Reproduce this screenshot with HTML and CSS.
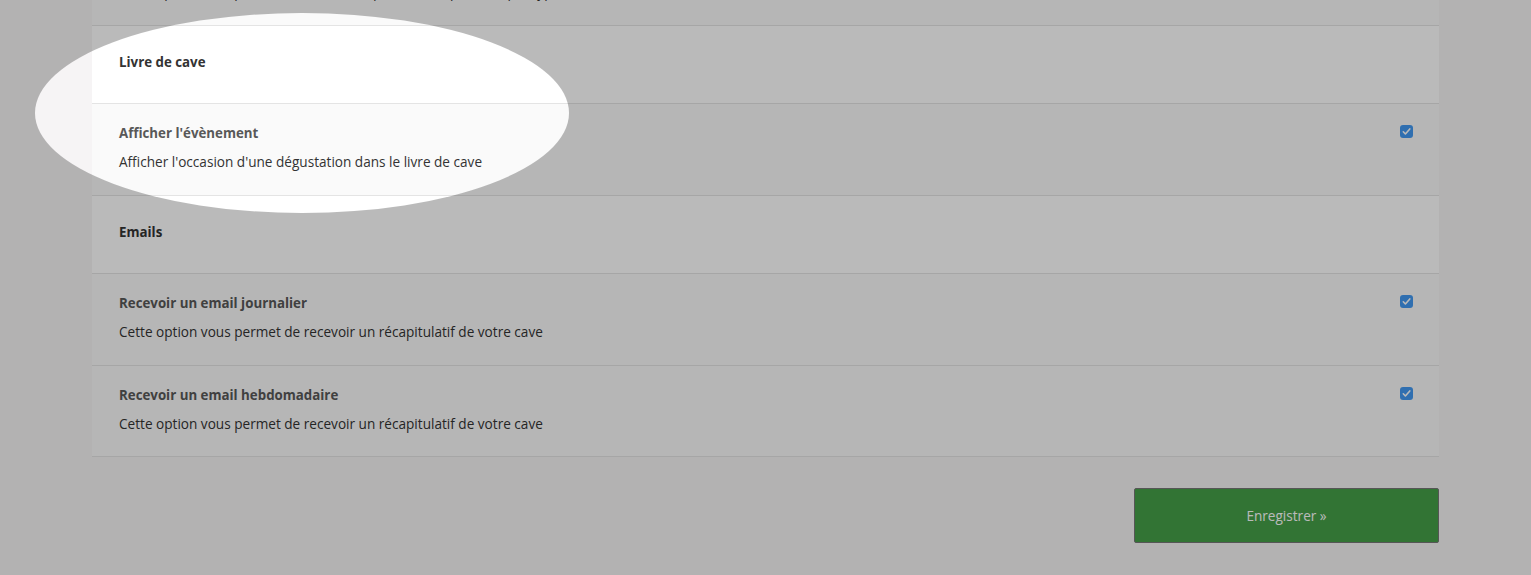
FILE: index.html
```html
<!DOCTYPE html>
<html>
  <head>
    <title>Préférences</title>
    <link rel="stylesheet" href="styles.css">
  </head>
  <body>
    <div class="page">
      <div class="settings">
        <div class="row option">
          <div class="option-text">
            <div class="option-title">Afficher les quantités</div>
            <div class="option-desc">Cette option vous permet d'afficher les quantités disponibles par type</div>
          </div>
          <span class="check"></span>
        </div>

        <div class="row section">Livre de cave</div>
        <div class="row option">
          <div class="option-text">
            <div class="option-title">Afficher l'évènement</div>
            <div class="option-desc">Afficher l'occasion d'une dégustation dans le livre de cave</div>
          </div>
          <span class="check"><svg viewBox="0 0 13 13"><path d="M3.3 6.8 L5.4 9 L9.8 3.9" /></svg></span>
        </div>

        <div class="row section">Emails</div>
        <div class="row option">
          <div class="option-text">
            <div class="option-title">Recevoir un email journalier</div>
            <div class="option-desc">Cette option vous permet de recevoir un récapitulatif de votre cave</div>
          </div>
          <span class="check"><svg viewBox="0 0 13 13"><path d="M3.3 6.8 L5.4 9 L9.8 3.9" /></svg></span>
        </div>
        <div class="row option last">
          <div class="option-text">
            <div class="option-title">Recevoir un email hebdomadaire</div>
            <div class="option-desc">Cette option vous permet de recevoir un récapitulatif de votre cave</div>
          </div>
          <span class="check"><svg viewBox="0 0 13 13"><path d="M3.3 6.8 L5.4 9 L9.8 3.9" /></svg></span>
        </div>
      </div>

      <div class="actions">
        <button class="save-button">Enregistrer »</button>
      </div>
    </div>

    <!-- tutorial spotlight over the "Livre de cave" block -->
    <div class="spotlight"></div>
  </body>
</html>
```

FILE: styles.css
```css
html, body {
  height: 100%;
}
body {
  margin: 0;
  background: #f6f4f5;
  font-family: "Open Sans", "Liberation Sans", sans-serif;
  font-size: 13.6px;
  color: #333;
  overflow: hidden;
}
.page {
  width: 1347px;
  margin: 0 auto;
}
.settings {
  margin-top: -66px;
}
.row {
  border-bottom: 1px solid #e4e4e4;
  padding: 0 27px 0 27px;
}
.section {
  background: #fff;
  box-sizing: border-box;
  height: 78px;
  padding-top: 26px;
  line-height: 20px;
  font-size: 13.3px;
  font-weight: 700;
  color: #333;
}
.option {
  background: #fafafa;
  height: 92px;
  box-sizing: border-box;
  padding-top: 19px;
  padding-right: 26px;
  display: flex;
  justify-content: space-between;
  align-items: flex-start;
}
.option.last {
  height: 91px;
}
.option-title {
  line-height: 20px;
  font-size: 13.3px;
  font-weight: 700;
  color: #585858;
  margin-bottom: 9px;
}
.option-desc {
  line-height: 20px;
  color: #333;
}
.check {
  width: 13px;
  height: 13px;
  margin-top: 2px;
  border-radius: 3px;
  background: #4299f2;
  display: block;
}
.check svg {
  width: 13px;
  height: 13px;
  display: block;
}
.check path {
  fill: none;
  stroke: #fff;
  stroke-width: 1.6;
  stroke-linecap: round;
  stroke-linejoin: round;
}
.actions {
  display: flex;
  justify-content: flex-end;
  padding-top: 31px;
}
.save-button {
  width: 305px;
  height: 55px;
  background: #459f48;
  border: 1px solid #777;
  border-radius: 2px;
  color: #fff;
  font-family: "Open Sans", "Liberation Sans", sans-serif;
  font-size: 13.6px;
  cursor: pointer;
}
.spotlight {
  position: absolute;
  left: 35px;
  top: 13px;
  width: 534px;
  height: 200px;
  border-radius: 50%;
  box-shadow: 0 0 0 3000px rgba(0, 0, 0, 0.27);
  pointer-events: none;
}
```
